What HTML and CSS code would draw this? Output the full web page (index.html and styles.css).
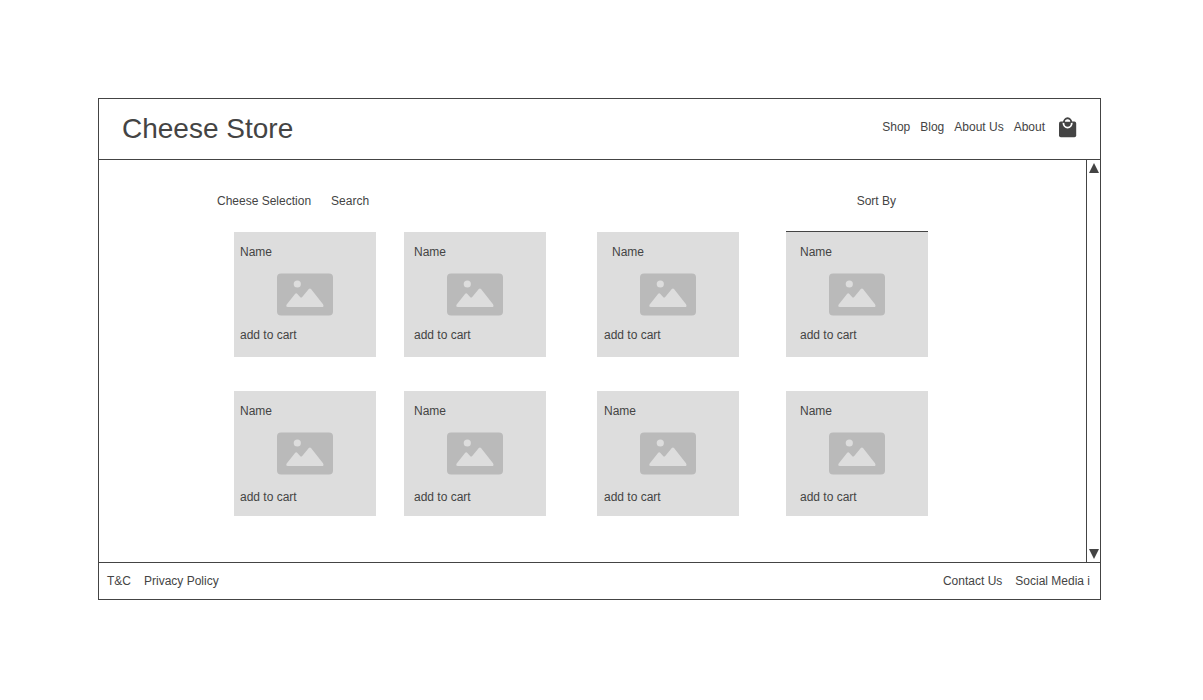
FILE: index.html
```html
<!DOCTYPE html>
<html lang="en">
<head>
<meta charset="utf-8">
<meta name="viewport" content="width=device-width, initial-scale=1">
<title>Cheese Store</title>
<link rel="stylesheet" href="styles.css">
</head>
<body>
<svg class="sprite" aria-hidden="true">
  <symbol id="picture" viewBox="0 0 56 43">
    <rect y="0.500" width="56" height="42" rx="4" fill="#bababa"/>
    <circle cx="20.300" cy="11" r="3.600" fill="#ddd"/>
    <path d="M10.900 34Q8.500 34 9.700 31.500L18.200 20.800Q19.200 19.600 20.200 20.800L23.300 24.300Q24.300 25 25.200 24L31.800 16.100Q32.900 14.900 34 16.100L46 31.200Q47.400 34 45 34Z" fill="#ddd"/>
  </symbol>
</svg>
<div class="store">
  <header class="header">
    <h1 class="brand">Cheese Store</h1>
    <nav class="nav" aria-label="Main">
      <a class="link" href="#">Shop</a>
      <a class="link" href="#">Blog</a>
      <a class="link" href="#">About Us</a>
      <a class="link" href="#">About</a>
      <button class="cart" type="button" aria-label="Cart">
        <svg class="cart-icon" viewBox="0 0 18 21" aria-hidden="true">
          <rect y="4.600" width="17.200" height="15.700" rx="1.800" fill="#444"/>
          <path d="M4.400 5.800A4.200 4.800 0 0 0 12.800 5.800" fill="none" stroke="#fff" stroke-width="1.800"/>
          <path d="M4.900 5.600A3.700 4.300 0 0 1 12.300 5.600" fill="none" stroke="#444" stroke-width="2"/>
          <path d="M5.900 4.400H11.300L10.600 3.500Q8.600 1.900 6.600 3.500Z" fill="#fff"/>
        </svg>
      </button>
    </nav>
  </header>
  <div class="body">
    <main class="catalog">
      <div class="toolbar">
        <button class="link" type="button">Cheese Selection</button>
        <button class="link" type="button">Search</button>
        <button class="link sort" type="button">Sort By</button>
      </div>
      <div class="row">
        <article class="card col-1"><h2 class="name">Name</h2><svg class="picture" role="img" aria-label="Product picture"><use href="#picture"/></svg><button class="link" type="button">add to cart</button></article>
        <article class="card col-2"><h2 class="name">Name</h2><svg class="picture" role="img" aria-label="Product picture"><use href="#picture"/></svg><button class="link" type="button">add to cart</button></article>
        <article class="card col-3"><h2 class="name name-indented">Name</h2><svg class="picture" role="img" aria-label="Product picture"><use href="#picture"/></svg><button class="link" type="button">add to cart</button></article>
        <article class="card col-4 card-ruled"><h2 class="name">Name</h2><svg class="picture" role="img" aria-label="Product picture"><use href="#picture"/></svg><button class="link" type="button">add to cart</button></article>
      </div>
      <div class="row row-low">
        <article class="card col-1"><h2 class="name">Name</h2><svg class="picture" role="img" aria-label="Product picture"><use href="#picture"/></svg><button class="link" type="button">add to cart</button></article>
        <article class="card col-2"><h2 class="name">Name</h2><svg class="picture" role="img" aria-label="Product picture"><use href="#picture"/></svg><button class="link" type="button">add to cart</button></article>
        <article class="card col-3"><h2 class="name">Name</h2><svg class="picture" role="img" aria-label="Product picture"><use href="#picture"/></svg><button class="link" type="button">add to cart</button></article>
        <article class="card col-4"><h2 class="name">Name</h2><svg class="picture" role="img" aria-label="Product picture"><use href="#picture"/></svg><button class="link" type="button">add to cart</button></article>
      </div>
    </main>
    <div class="scrollbar">
      <button class="arrow" type="button" aria-label="Scroll up"><svg class="arrow-icon" viewBox="0 0 10 10" aria-hidden="true"><path d="M5 0L10 10H0Z" fill="#444"/></svg></button>
      <button class="arrow" type="button" aria-label="Scroll down"><svg class="arrow-icon" viewBox="0 0 10 10" aria-hidden="true"><path d="M0 0H10L5 10Z" fill="#444"/></svg></button>
    </div>
  </div>
  <footer class="footer">
    <nav class="footer-group" aria-label="Legal">
      <a class="link" href="#">T&amp;C</a>
      <a class="link" href="#">Privacy Policy</a>
    </nav>
    <nav class="footer-group" aria-label="Contact">
      <a class="link" href="#">Contact Us</a>
      <a class="link" href="#">Social Media i</a>
    </nav>
  </footer>
</div>
</body>
</html>
```

FILE: styles.css
```css
* { box-sizing: border-box; }
body {
  margin: 0;
  padding: 98px 102px 100px 98px;
  background: #fff;
  color: #444;
  font: 12px/14px "Liberation Sans", Arial, sans-serif;
}
.sprite { display: none; }
button {
  border: 0;
  padding: 0;
  background: none;
  color: inherit;
  font: inherit;
  cursor: pointer;
}
.link { color: inherit; text-decoration: none; white-space: nowrap; }
.store { border: 1px solid #444; }
.header {
  display: flex;
  align-items: center;
  justify-content: space-between;
  padding: 14px 23px;
  border-bottom: 1px solid #444;
}
.brand { margin: 0; font-size: 28px; line-height: 32px; font-weight: 400; }
.nav { display: flex; align-items: center; gap: 10px; padding-bottom: 4px; }
.cart { display: flex; margin-left: 4px; }
.cart-icon { width: 18px; height: 21px; }
.body { display: flex; border-bottom: 1px solid #444; }
.catalog { flex: 1; padding: 34px 158px 46px 118px; }
.toolbar { display: flex; gap: 20px; padding-right: 32px; margin-bottom: 24px; }
.sort { margin-left: auto; }
.row {
  display: grid;
  grid-template-columns: 170fr 193fr 189fr 142fr;
  padding-left: 17px;
}
.row-low { margin-top: 34px; }
.card {
  display: flex;
  flex-direction: column;
  align-items: flex-start;
  width: 142px;
  height: 125px;
  padding-top: 13px;
  background: #ddd;
}
.card-ruled { box-shadow: 0 -1px #444; }
.col-1 { padding-left: 6px; }
.col-2 { padding-left: 10px; }
.col-3 { padding-left: 7px; }
.col-4 { padding-left: 14px; }
.name { margin: 0; font-size: 12px; line-height: 14px; font-weight: 400; }
.name-indented { padding-left: 8px; }
.picture { width: 56px; height: 43px; margin: 14px 0 12px; }
.col-1 .picture { margin-left: 37px; }
.col-2 .picture { margin-left: 33px; }
.col-3 .picture { margin-left: 36px; }
.col-4 .picture { margin-left: 29px; }
.row-low .picture { margin-bottom: 15px; }
.scrollbar {
  display: flex;
  flex-direction: column;
  align-items: center;
  justify-content: space-between;
  width: 14px;
  padding: 3px 0;
  border-left: 1px solid #444;
}
.arrow { display: flex; }
.arrow-icon { width: 10px; height: 10px; }
.footer {
  display: flex;
  justify-content: space-between;
  padding: 11px 10px 11px 8px;
}
.footer-group { display: flex; gap: 13px; }
```
